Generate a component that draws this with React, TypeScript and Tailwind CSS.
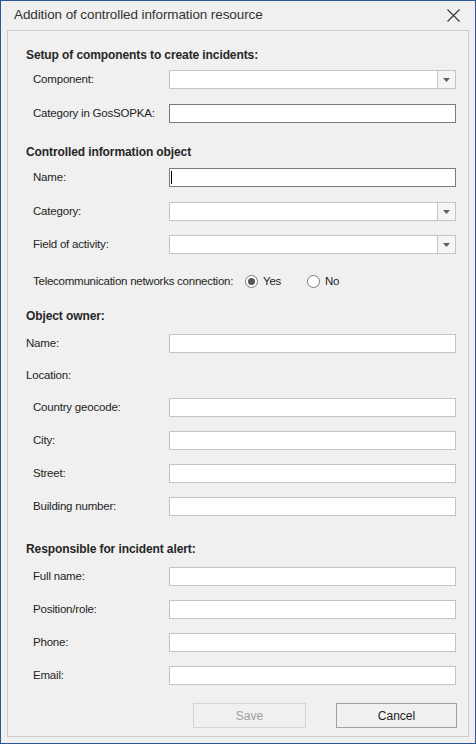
import React from "react";

const font = { fontFamily: '"Liberation Sans", Arial, sans-serif' };

const TextBox = ({ dark, caret }: { dark?: boolean; caret?: boolean }) => (
  <div
    className={`w-[287px] h-[19px] bg-white border flex items-center ${
      dark ? "border-[#7a7a7a]" : "border-[#c4c4c4]"
    }`}
  >
    {caret && <div className="ml-[1px] w-[1px] h-[13px] bg-black" />}
  </div>
);

const ComboBox = () => (
  <div className="w-[287px] h-[19px] bg-white border border-[#c4c4c4] flex">
    <div className="flex-1" />
    <div className="w-[18px] border-l border-[#c4c4c4] bg-[#f5f5f5] flex items-center justify-center">
      <svg width="7" height="4" viewBox="0 0 7 4">
        <path d="M0 0 L7 0 L3.5 4 Z" fill="#606060" />
      </svg>
    </div>
  </div>
);

const Row = ({
  label,
  mt,
  indent = true,
  children,
}: {
  label: string;
  mt: string;
  indent?: boolean;
  children: React.ReactNode;
}) => (
  <div className={`flex items-center h-[19px] ${mt}`}>
    <div
      className={`text-[11.5px] tracking-[-0.2px] whitespace-nowrap text-[#1e1e1e] w-[161px] ${
        indent ? "pl-[25px]" : "pl-[18px]"
      }`}
    >
      {label}
    </div>
    {children}
  </div>
);

const Heading = ({ text, mt }: { text: string; mt: string }) => (
  <div
    className={`h-[16px] flex items-center pl-[18px] text-[12px] tracking-[-0.1px] font-bold text-[#262626] ${mt}`}
  >
    {text}
  </div>
);

const Radio = ({ checked, label }: { checked?: boolean; label: string }) => (
  <div className="flex items-center gap-[5px] w-[62px]">
    <div className="w-[13px] h-[13px] rounded-full border border-[#7a7a7a] bg-white flex items-center justify-center">
      {checked && <div className="w-[7px] h-[7px] rounded-full bg-[#555555]" />}
    </div>
    <span className="text-[11.5px] tracking-[-0.2px] text-[#1e1e1e]">{label}</span>
  </div>
);

export default function App() {
  return (
    <div
      style={font}
      className="w-[476px] h-[744px] bg-[#f0f0f0] border border-[#2b579a] flex flex-col"
    >
      <div className="h-[29px] flex items-center justify-between pl-[13px] pr-[15px]">
        <span className="text-[13.5px] tracking-[-0.1px] text-[#333333]">
          Addition of controlled information resource
        </span>
        <svg width="13" height="13" viewBox="0 0 13 13">
          <path d="M0.5 0.5 L12.5 12.5 M12.5 0.5 L0.5 12.5" stroke="#333333" strokeWidth="1.1" />
        </svg>
      </div>
      <div className="mx-[6px] mb-[6px] flex-1 border border-[#cccccc] flex flex-col">
        <Heading text="Setup of components to create incidents:" mt="mt-[16px]" />
        <Row label="Component:" mt="mt-[7px]">
          <ComboBox />
        </Row>
        <Row label="Category in GosSOPKA:" mt="mt-[15px]">
          <TextBox dark />
        </Row>

        <Heading text="Controlled information object" mt="mt-[21px]" />
        <Row label="Name:" mt="mt-[8px]">
          <TextBox dark caret />
        </Row>
        <Row label="Category:" mt="mt-[15px]">
          <ComboBox />
        </Row>
        <Row label="Field of activity:" mt="mt-[14px]">
          <ComboBox />
        </Row>
        <div className="flex items-center h-[19px] mt-[18px] pl-[25px]">
          <span className="text-[11.5px] tracking-[-0.25px] whitespace-nowrap text-[#1e1e1e] w-[212px]">
            Telecommunication networks connection:
          </span>
          <div className="flex items-center">
            <Radio checked label="Yes" />
            <Radio label="No" />
          </div>
        </div>

        <Heading text="Object owner:" mt="mt-[17px]" />
        <Row label="Name:" mt="mt-[10px]" indent={false}>
          <TextBox />
        </Row>
        <div className="h-[19px] mt-[13px] flex items-center pl-[18px] text-[11.5px] tracking-[-0.2px] text-[#1e1e1e]">
          Location:
        </div>
        <Row label="Country geocode:" mt="mt-[13px]">
          <TextBox />
        </Row>
        <Row label="City:" mt="mt-[14px]">
          <TextBox />
        </Row>
        <Row label="Street:" mt="mt-[14px]">
          <TextBox />
        </Row>
        <Row label="Building number:" mt="mt-[14px]">
          <TextBox />
        </Row>

        <Heading text="Responsible for incident alert:" mt="mt-[25px]" />
        <Row label="Full name:" mt="mt-[10px]">
          <TextBox />
        </Row>
        <Row label="Position/role:" mt="mt-[14px]">
          <TextBox />
        </Row>
        <Row label="Phone:" mt="mt-[14px]">
          <TextBox />
        </Row>
        <Row label="Email:" mt="mt-[14px]">
          <TextBox />
        </Row>

        <div className="flex justify-end gap-[30px] pr-[11px] mt-[18px]">
          <button className="w-[113px] h-[25px] border border-[#d5d5d5] bg-[#f0f0f0] text-[12px] text-[#a0a0a0]">
            Save
          </button>
          <button className="w-[121px] h-[25px] border border-[#a0a0a0] bg-[#f0f0f0] text-[12px] text-[#1e1e1e]">
            Cancel
          </button>
        </div>
      </div>
    </div>
  );
}
